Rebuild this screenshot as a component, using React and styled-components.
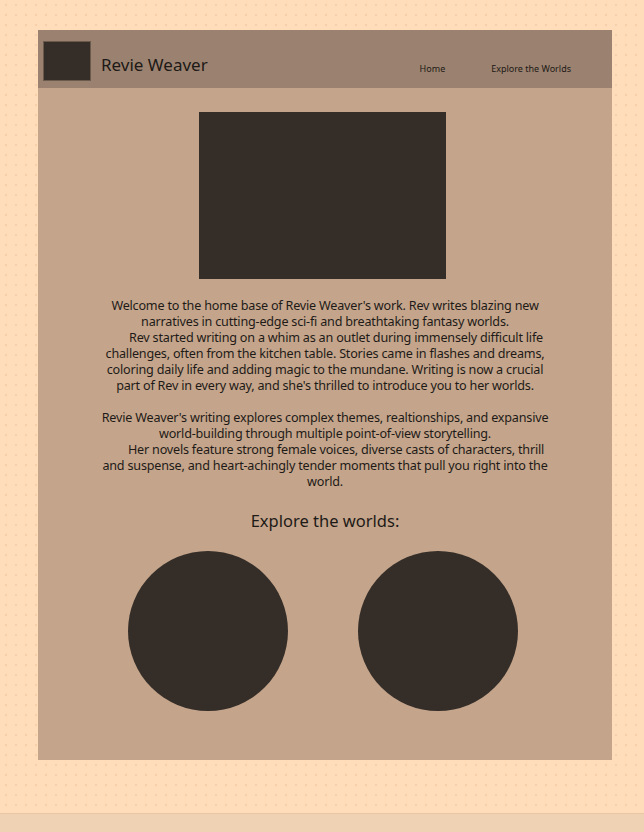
import styled, { createGlobalStyle } from 'styled-components';

const GlobalStyle = createGlobalStyle`
  html, body {
    margin: 0;
    padding: 0;
    background: #efd1b3;
  }
  body {
    font-family: "Noto Sans", "Open Sans", sans-serif;
    color: #1e1a17;
  }
`;

const worlds = [{ id: 'first' }, { id: 'second' }];

export default function App() {
  return (
    <>
      <GlobalStyle />
      <SPage>
        <SFrame>
          {/* header */}
          <SHeader>
            <SLogo />
            <STitle>Revie Weaver</STitle>
            <SNav>
              <SNavLink href="#home">Home</SNavLink>
              <SNavLink href="#worlds">Explore the Worlds</SNavLink>
            </SNav>
          </SHeader>
          {/* main */}
          <SMain>
            <SHero />
            <SText>
              Welcome to the home base of Revie Weaver's work. Rev writes blazing new<br />
              narratives in cutting-edge sci-fi and breathtaking fantasy worlds.
              <br />
              <SIndent />
              Rev started writing on a whim as an outlet during immensely difficult life<br />
              challenges, often from the kitchen table. Stories came in flashes and dreams,<br />
              coloring daily life and adding magic to the mundane. Writing is now a crucial<br />
              part of Rev in every way, and she's thrilled to introduce you to her worlds.
            </SText>
            <SText>
              Revie Weaver's writing explores complex themes, realtionships, and expansive<br />
              world-building through multiple point-of-view storytelling.
              <br />
              <SIndent />
              Her novels feature strong female voices, diverse casts of characters, thrill<br />
              and suspense, and heart-achingly tender moments that pull you right into the<br />
              world.
            </SText>
            <SHeading>Explore the worlds:</SHeading>
            <SWorlds>
              {worlds.map((w) => (
                <SWorld key={w.id} />
              ))}
            </SWorlds>
          </SMain>
        </SFrame>
      </SPage>
      <SFooter />
    </>
  );
}

const SPage = styled.div`
  height: 813px;
  box-sizing: border-box;
  padding-top: 30px;
  background-color: #ffdcba;
  background-image: radial-gradient(circle, #f7cfaa 0.9px, transparent 1.4px);
  background-size: 10px 10px;
  background-position: 1px 0;
`;

const SFrame = styled.div`
  width: 574px;
  margin-left: 38px;
  background: #c4a58b;
`;

const SHeader = styled.header`
  display: flex;
  align-items: center;
  height: 58px;
  padding: 0 41px 0 5px;
  background: #9b8270;
`;

const SLogo = styled.div`
  width: 46px;
  height: 38px;
  margin-top: 4px;
  background: #352d28;
  border: 1px solid #6c5a4d;
`;

const STitle = styled.h1`
  margin: 10px 0 0 10px;
  font-size: 17px;
  font-weight: 400;
  color: #1d1916;
`;

const SNav = styled.nav`
  display: flex;
  gap: 46px;
  margin-left: auto;
  padding-top: 18px;
`;

const SNavLink = styled.a`
  font-size: 9px;
  color: #1d1916;
  text-decoration: none;
`;

const SMain = styled.main`
  display: flex;
  flex-direction: column;
  align-items: center;
  padding: 24px 0 49px;
`;

const SHero = styled.div`
  width: 247px;
  height: 167px;
  margin-right: 5px;
  background: #352d28;
`;

const SText = styled.p`
  width: 470px;
  margin: 19px 0 0;
  font-size: 12.6px;
  letter-spacing: -0.2px;
  line-height: 16px;
  text-align: center;
  & + & {
    margin-top: 16px;
  }
`;

const SIndent = styled.span`
  display: inline-block;
  width: 22px;
`;

const SHeading = styled.h2`
  margin: 20px 0 0;
  font-size: 16.5px;
  font-weight: 400;
  line-height: 22px;
`;

const SWorlds = styled.div`
  display: flex;
  gap: 70px;
  margin-top: 19px;
  margin-right: 5px;
`;

const SWorld = styled.div`
  width: 160px;
  height: 160px;
  border-radius: 50%;
  background: #352d28;
`;

const SFooter = styled.div`
  height: 19px;
  border-top: 1px solid #e8c7a6;
  background: #efd1b3;
`;
